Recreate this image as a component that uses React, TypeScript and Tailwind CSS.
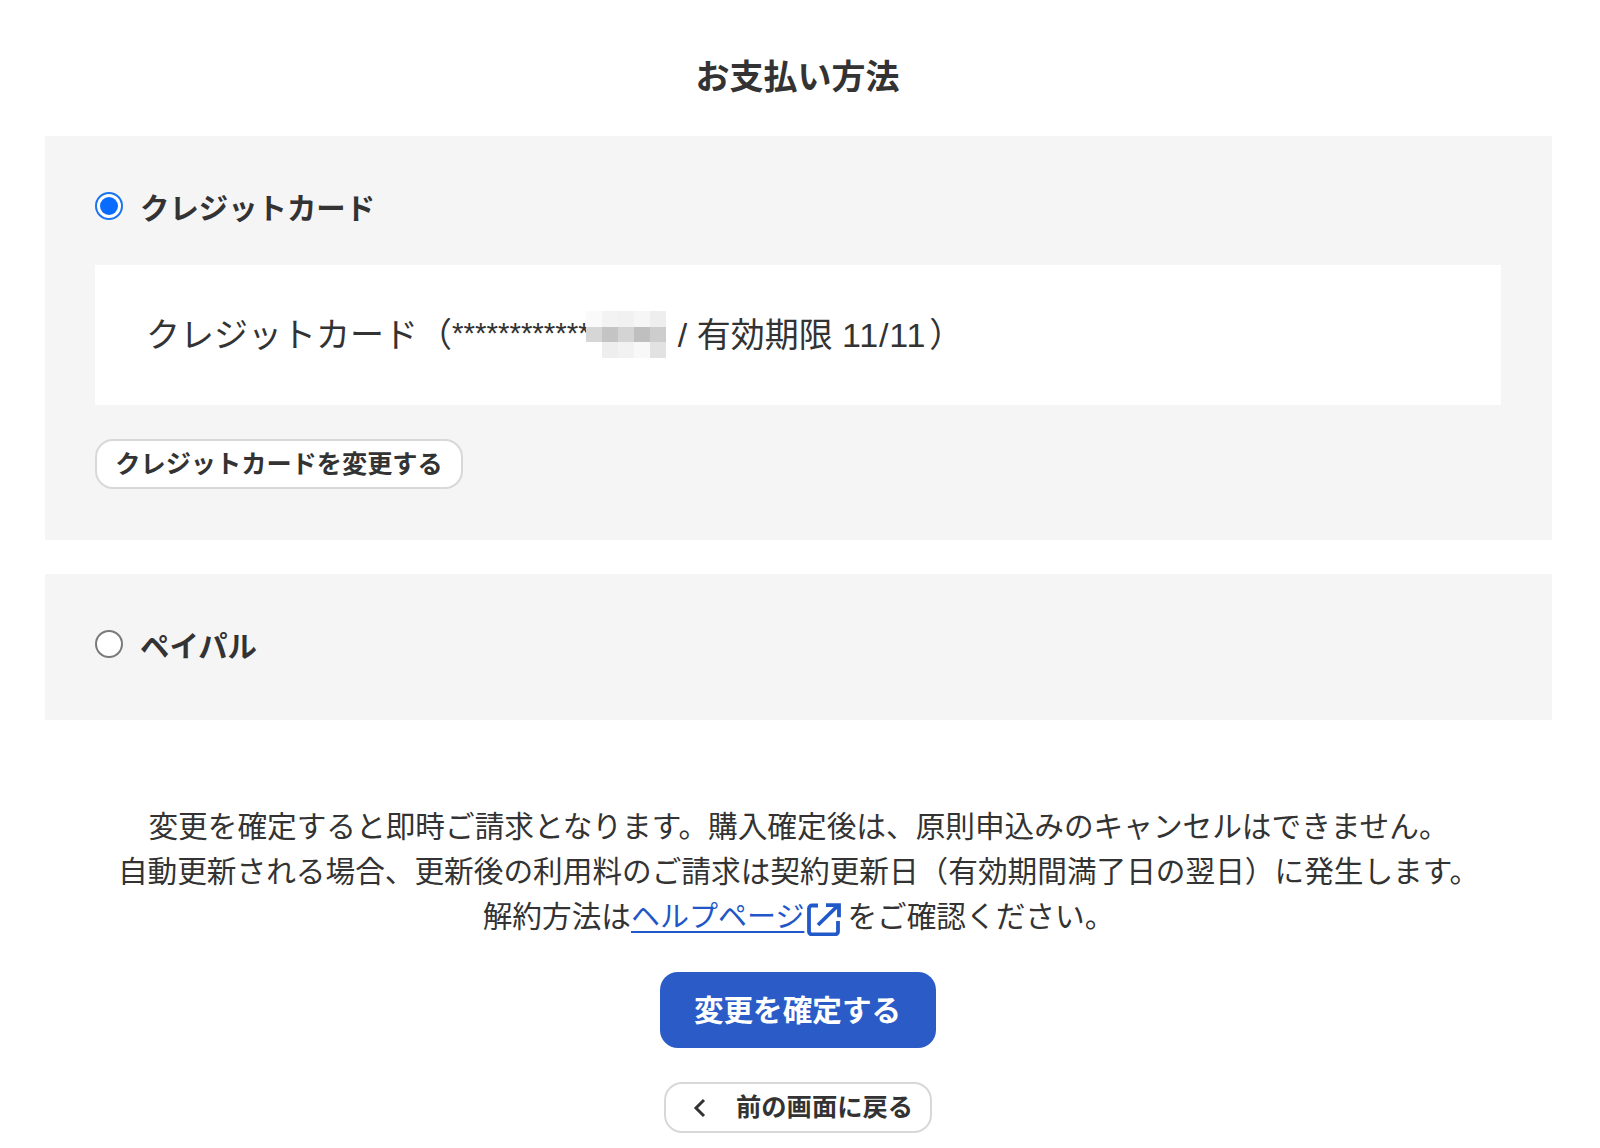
import { useState } from 'react';

const maskCells = [
  '#fafafa', '#f3f3f3', '#f1f1f1', '#f6f6f6', '#eeeeee',
  '#d6d6d6', '#c4c4c4', '#d4d4d4', '#bfbfbf', '#cdcdcd',
  '#ffffff', '#eeeeee', '#f2f2f2', '#f8f8f8', '#e2e2e2',
];

function Radio({ checked }: { checked?: boolean }) {
  if (checked) {
    return (
      <span className="flex h-[28px] w-[28px] shrink-0 items-center justify-center rounded-full border-[2px] border-[#1a73f0] bg-white">
        <span className="h-[18px] w-[18px] rounded-full bg-[#0a6cff]" />
      </span>
    );
  }
  return <span className="-mt-[7px] h-[28px] w-[28px] shrink-0 rounded-full border-[2px] border-[#7a7a7a] bg-white" />;
}

function ExternalIcon() {
  return (
    <svg viewBox="0 0 34 34" className="mr-[6px] ml-[3px] inline-block h-[34px] w-[34px] align-[-9px]" fill="none" stroke="#2259c9" strokeWidth="3.800">
      <path d="M11 3.500H5a3 3 0 0 0-3 3v23a3 3 0 0 0 3 3h23a3 3 0 0 0 3-3V19" />
      <path d="M11 23 31 3.500M19 3.200h13v12" />
    </svg>
  );
}

export default function App() {
  const [method] = useState('card');

  return (
    <div className="flex h-[1148px] flex-col items-center overflow-hidden bg-white pr-[48px] pl-[45px] font-['Liberation_Sans','Noto_Sans_CJK_JP',sans-serif] text-[#333333]">
      <h1 className="mt-[55px] mr-[2px] text-[34px] leading-[44px] font-bold">お支払い方法</h1>

      <section className="mt-[37px] h-[404px] w-full bg-[#f6f5f6] pt-[56px] pr-[51px] pl-[50px]">
        <div className="flex h-[28px] items-center gap-[17px]">
          <Radio checked={method === 'card'} />
          <span className="pt-[7px] text-[29.400px] font-bold">クレジットカード</span>
        </div>
        <div className="mt-[45px] flex h-[140px] items-center whitespace-nowrap bg-white pl-[51px] text-[34px]">
          クレジットカード（<span className="-mt-[4px] text-[29.500px]">************</span>
          <span className="-mt-[1px] -ml-[4px] grid h-[47px] w-[80px] grid-cols-5 grid-rows-3">
            {maskCells.map((c, i) => (
              <span key={i} style={{ backgroundColor: c }} />
            ))}
          </span>
          <span className="ml-[12px]">/ 有効期限 <span className="tracking-[0.8px]">11/11</span><span className="ml-[3px]">）</span></span>
        </div>
        <button className="mt-[34px] flex h-[50px] w-[368px] items-center justify-center rounded-[18px] border-[2px] border-[#d8d8d8] bg-white pt-[2px] text-[25.200px] font-bold">
          クレジットカードを変更する
        </button>
      </section>

      <section className="mt-[34px] flex h-[146px] w-full items-center gap-[17px] bg-[#f6f5f6] px-[50px]">
        <Radio />
        <span className="text-[29.400px] font-bold">ペイパル</span>
      </section>

      <div className="mt-[84px] text-center text-[29.660px] leading-[45px] whitespace-nowrap">
        <p>変更を確定すると即時ご請求となります。購入確定後は、原則申込みのキャンセルはできません。</p>
        <p>自動更新される場合、更新後の利用料のご請求は契約更新日（有効期間満了日の翌日）に発生します。</p>
        <p>
          解約方法は<a href="#" className="text-[29px] text-[#1f57c8] underline underline-offset-4">ヘルプページ</a>
          <ExternalIcon />をご確認ください。
        </p>
      </div>

      <button className="mt-[32px] mr-[2px] h-[76px] w-[276px] rounded-[18px] bg-[#2a5bc7] pt-[2px] text-[29.600px] font-bold text-white">
        変更を確定する
      </button>

      <button className="mt-[34px] mr-[1px] flex h-[51px] w-[268px] items-center rounded-[18px] border-[2px] border-[#d8d8d8] bg-white pl-[26px] text-[25.300px] font-bold">
        <svg viewBox="0 0 16 20" className="h-[20px] w-[16px]" fill="none" stroke="#333333" strokeWidth="3">
          <path d="M12 2 4 10l8 8" />
        </svg>
        <span className="ml-[28px]">前の画面に戻る</span>
      </button>
    </div>
  );
}
